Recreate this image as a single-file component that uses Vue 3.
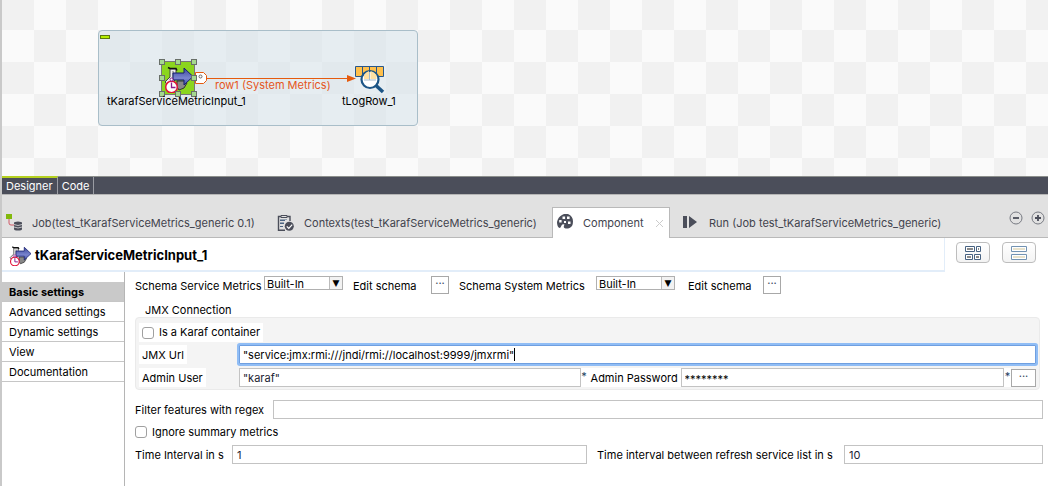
<script setup>
import { ref } from 'vue'

const sections = ['Basic settings', 'Advanced settings', 'Dynamic settings', 'View', 'Documentation']
const handles = [[162, 62], [178, 62], [194, 62], [162, 78], [194, 78], [162, 94], [178, 94], [194, 94]]
const serviceSchema = ref('Built-In')
const systemSchema = ref('Built-In')
const jmxUrl = ref('"service:jmx:rmi:///jndi/rmi://localhost:9999/jmxrmi"')
const adminUser = ref('"karaf"')
const adminPassword = ref('********')
const regex = ref('')
const interval = ref('1')
const refreshInterval = ref('10')
</script>

<template>
  <div class="studio">
    <svg class="defs" width="0" height="0" aria-hidden="true">
      <defs>
        <linearGradient id="arrowFill" x1="0" y1="0" x2="0" y2="1">
          <stop offset="0" stop-color="#3a479c" /><stop offset="0.6" stop-color="#7a85cf" /><stop offset="1" stop-color="#3f4aa5" />
        </linearGradient>
        <symbol id="karaf" viewBox="0 0 32 32">
          <path d="M9 8h6v9l-3 5-6 1-2-2 5-5z" fill="#eee" stroke="#444" />
          <path d="M12 10v8" stroke="#aaa" stroke-width="2" />
          <path d="M7 6.500l2 1h6l1 2" fill="none" stroke="#111" stroke-width="1.500" />
          <path d="M16 20h8l2 2-3 5-5 2-2-3z" fill="#888" stroke="#333" />
          <path d="M12 12h11V7l9 8.500-9 8.500v-5H12z" fill="url(#arrowFill)" stroke="#141c6e" />
          <circle cx="10.500" cy="26" r="5.800" fill="#fff" stroke="#e3123a" stroke-width="1.500" />
          <path d="M10.500 21.500v5h4" fill="none" stroke="#8a1a8c" stroke-width="1.300" />
          <circle cx="10.500" cy="18.500" r="1.500" fill="#fff" stroke="#8a1a8c" />
        </symbol>
      </defs>
    </svg>

    <main class="canvas">
      <div class="subjob"><span class="collapse"></span></div>
      <svg class="diagram" width="420" height="130" aria-hidden="true">
        <rect x="161.500" y="61.500" width="33" height="33" fill="#8bd51e" stroke="#777" />
        <use href="#karaf" x="161" y="61" width="32" height="32" />
        <path d="M195.500 72.500h8l3 3v5l-3 3h-8z" fill="#fff" stroke="#e55b0e" />
        <circle cx="200.500" cy="76.500" r="1.500" fill="none" stroke="#666" />
        <path d="M207 78.500h142" stroke="#e55b0e" />
        <path d="M347 75l9 3.500-9 3.500z" fill="#e55b0e" />
        <rect v-for="([x, y], i) in handles" :key="i" :x="x - 2.5" :y="y - 2.5" width="5" height="5" fill="#a5d88f" stroke="#686f68" />
        <path d="M355.500 66.500h28v10h-28z" fill="#ffc04c" stroke="#28578a" />
        <path d="M362.500 66v11M369.500 66v11M376.500 66v11" stroke="#28578a" />
        <circle cx="370" cy="79.500" r="8.500" fill="#fff" stroke="#1c5586" stroke-width="2.200" />
        <path d="M364 79v-4q2-3 5-4v8zM370.500 71q4 1 6 4v4h-6z" fill="#ffe1a3" />
        <path d="M364 80h12M369.500 72v8" stroke="#a3b8ca" />
        <path d="M376 85.500l7 6.500" stroke="#1c5586" stroke-width="3.500" />
      </svg>
      <span class="node-label source">tKarafServiceMetricInput_1</span>
      <span class="node-label link">row1 (System Metrics)</span>
      <span class="node-label target">tLogRow_1</span>
    </main>

    <nav class="editor-tabs">
      <button class="etab active">Designer</button>
      <button class="etab">Code</button>
    </nav>

    <nav class="view-tabs">
      <button class="vtab job">
        <svg width="18" height="18" viewBox="0 0 18 18"><path d="M0 0h6v5H0z" fill="#82b90c" /><path d="M3 5v4q0 2 2 2h3" fill="none" stroke="#d05a68" /><path d="M8 9q0-1.500 4-1.500T16 9v6q0 1.500-4 1.500T8 15z" fill="#4b4e5a" /><path d="M8 10.500q4 2 8 0M8 13q4 2 8 0" fill="none" stroke="#e1e1e1" stroke-width=".8" /></svg>
        <span>Job(test_tKarafServiceMetrics_generic 0.1)</span>
      </button>
      <button class="vtab contexts">
        <svg width="18" height="18" viewBox="0 0 18 18"><path d="M4 2.500H1.500v13.800H8M10 2.500h3V7" fill="none" stroke="#4b4e5a" stroke-width="1.400" /><path d="M4 1.500h6v2H4z" fill="#e1e1e1" stroke="#4b4e5a" /><path d="M3 6.500h5M3 9.500h4M3 12.500h3" stroke="#4b6482" /><path d="M3 5.500h7M3 8.500h4" stroke="#4b6482" stroke-width=".5" /><circle cx="12.300" cy="12.300" r="4.500" fill="#4b4e5a" /><path d="M9.800 12.300l2 2 3.400-3.600" fill="none" stroke="#fff" stroke-width="1.200" /></svg>
        <span>Contexts(test_tKarafServiceMetrics_generic)</span>
      </button>
      <button class="vtab component current">
        <svg width="18" height="18" viewBox="0 0 18 18"><path fill-rule="evenodd" d="M6 1Q9-1 12 0q5 2 5 7.500 0 5-3.500 6.500-3 1-5 0-1.500-1 0-3.500-2-1-3 1-1 2.500-2 2.500Q1 13 1 8 2 3 6 1zM6.500 2.500v2.600h2.600V2.500zM11 2.500v2.600h2.600V2.500zM3.200 6v2.400h2.400V6zM8 7v2h2V7zM12 7.500v2.500h2.500V7.500z" fill="#4b4e5a" /></svg>
        <span>Component</span>
        <svg class="close" width="9" height="9" viewBox="0 0 9 9"><path d="M1 1l7 7M8 1L1 8" stroke="#ccc" /></svg>
      </button>
      <button class="vtab run">
        <svg width="16" height="14" viewBox="0 0 16 14"><path d="M0 0h4v12H0zM6 0l8 6-8 6z" fill="#4b4e5a" /></svg>
        <span>Run (Job test_tKarafServiceMetrics_generic)</span>
      </button>
      <div class="window-tools">
        <button class="round" aria-label="Minimize"><svg width="14" height="14" viewBox="0 0 14 14"><circle cx="7" cy="7" r="6" fill="none" stroke="#777a82" /><path d="M4 7h6" stroke="#4b4e5a" stroke-width="1.800" /></svg></button>
        <button class="round" aria-label="Maximize"><svg width="14" height="14" viewBox="0 0 14 14"><circle cx="7" cy="7" r="6" fill="none" stroke="#777a82" /><path d="M4 7h6M7 4v6" stroke="#4b4e5a" stroke-width="1.800" /></svg></button>
      </div>
    </nav>

    <header class="title-row">
      <div class="title">
        <svg width="24" height="24" viewBox="0 0 32 32"><use href="#karaf" width="32" height="32" /></svg>
        <h1>tKarafServiceMetricInput_1</h1>
      </div>
      <div class="layout-tools">
        <button aria-label="Table layout"><svg width="16" height="14" viewBox="0 0 16 14"><g fill="#fff" stroke="#476282"><path d="M.5.500h9v5h-9zM11.500.500h4v5h-4zM.5 8.500h7v5h-7zM9.500 8.500h6v5h-6z" /></g><path d="M2 2h6v2H2zM13 2h1v2h-1zM2 10h4v2H2zM11 10h3v2h-3z" fill="#8b8b8b" /></svg></button>
        <button aria-label="Compact layout"><svg width="16" height="14" viewBox="0 0 16 14"><g fill="#fff" stroke="#7393b3"><path d="M.5.500h15v5H.5zM.5 8.500h15v5H.5z" /></g><path d="M2 2h12v2H2zM2 10h12v2H2z" fill="#e8e2cc" /></svg></button>
      </div>
    </header>

    <section class="body">
      <nav class="sections">
        <button v-for="(name, i) in sections" :key="name" :class="{ selected: i === 0 }">{{ name }}</button>
      </nav>

      <form class="settings" @submit.prevent>
        <div class="schemas">
          <label class="schema-label" for="service-schema">Schema Service Metrics</label>
          <span class="select"><select id="service-schema" v-model="serviceSchema"><option>Built-In</option></select><i>▼</i></span>
          <span class="edit">Edit schema</span>
          <button class="dots" type="button" aria-label="Edit service schema">···</button>
          <label class="schema-label second" for="system-schema">Schema System Metrics</label>
          <span class="select"><select id="system-schema" v-model="systemSchema"><option>Built-In</option></select><i>▼</i></span>
          <span class="edit second-edit">Edit schema</span>
          <button class="dots" type="button" aria-label="Edit system schema">···</button>
        </div>

        <div class="group-title">JMX Connection</div>
        <div class="group">
          <label class="chip check"><input type="checkbox" />Is a Karaf container</label>
          <div class="line">
            <span class="lead"><label class="chip" for="jmx">JMX Url</label></span>
            <span class="focus-box">
              <input id="jmx" v-model="jmxUrl" class="field focused" />
              <span class="caret-layer" aria-hidden="true"><span class="ghost">{{ jmxUrl }}</span><b class="caret"></b></span>
            </span>
          </div>
          <div class="line admin">
            <span class="lead"><label class="chip" for="user">Admin User</label></span>
            <input id="user" v-model="adminUser" class="field user" />
            <span class="star">*</span>
            <label class="chip pass-label" for="password">Admin Password</label>
            <input id="password" v-model="adminPassword" class="field password" />
            <span class="star">*</span>
            <button class="dots wide" type="button" aria-label="Edit password">···</button>
          </div>
        </div>

        <div class="line filter">
          <label for="regex">Filter features with regex</label>
          <input id="regex" v-model="regex" class="field" />
        </div>
        <label class="check ignore"><input type="checkbox" />Ignore summary metrics</label>
        <div class="line times">
          <label for="interval">Time Interval in s</label>
          <input id="interval" v-model="interval" class="field interval" />
          <label class="refresh-label" for="refresh">Time interval between refresh service list in s</label>
          <input id="refresh" v-model="refreshInterval" class="field refresh" />
        </div>
      </form>
    </section>
  </div>
</template>

<style>
body { margin: 0; background: #fff; }
</style>

<style scoped>
.studio, .studio * { box-sizing: border-box; }
.studio {
  font: 11px/14px Inter, "Liberation Sans", sans-serif;
  color: #000;
  min-height: 100vh;
  border-left: 2px solid #c9c9c9;
  display: flex;
  flex-direction: column;
}
.defs { position: absolute; }
button, input, select { font: inherit; color: inherit; margin: 0; border-radius: 0; }
button { background: none; border: 0; padding: 0; white-space: nowrap; }
label, span { white-space: nowrap; }
svg { flex: none; }

.canvas {
  position: relative;
  height: 176px;
  overflow: hidden;
  background: repeating-conic-gradient(#fafafa 0 25%, #f1f1f1 0 50%) 0 -2px / 64px 64px;
}
.subjob {
  position: absolute;
  left: 96px;
  top: 30px;
  width: 320px;
  height: 96px;
  border: 1px solid #a9bec9;
  border-radius: 4px;
  background: rgba(216, 229, 235, 0.6);
}
.collapse { position: absolute; left: 1px; top: 4px; width: 10px; height: 4px; background: #b4ee00; border: 1px solid #5d7a10; }
.diagram { position: absolute; left: -2px; top: 0; }
.node-label { position: absolute; }
.source { left: 105px; top: 94px; }
.link { left: 213px; top: 78px; color: #e5561c; }
.target { left: 340px; top: 94px; }

.editor-tabs { display: flex; height: 19px; background: #4b4e5a; border-top: 1px solid #8c8f8c; border-bottom: 1px solid #b5b5b5; }
.etab { color: #fff; padding: 0 4px; border-right: 1px solid #9a9ca3; height: 17px; }
.etab.active { border-top: 2px solid #b5d120; margin-top: -1px; height: 18px; }

.view-tabs { display: flex; height: 43px; background: #e1e1e1; border-bottom: 1px solid #b9b9b9; }
.vtab { display: flex; align-items: center; align-self: flex-end; height: 30px; color: #41434d; border: 1px solid transparent; border-bottom: 0; }
.vtab svg { margin-right: 8px; }
.job { padding-left: 3px; width: 272px; }
.contexts { padding-left: 2px; width: 278px; }
.contexts svg { margin-right: 9px; }
.component { padding-left: 3px; width: 118px; }
.component svg { margin-right: 9px; }
.component .close { margin: 0 5px 0 auto; }
.current { background: #fff; height: 31px; margin-bottom: -1px; border-color: #b9b9b9; }
.run { padding-left: 12px; }
.run svg { margin-right: 10px; }
.window-tools { display: flex; gap: 8px; margin: 16px 3px 0 auto; height: 14px; }
.round, .round svg { display: block; width: 14px; height: 14px; }

.title-row { display: flex; height: 34px; align-items: flex-start; }
.title { flex: 1; display: flex; align-items: center; height: 34px; border-bottom: 2px solid #e2edf9; border-right: 1px solid #e2edf9; padding-left: 5px; }
h1 { font-size: 13px; line-height: 16px; margin: 2px 0 0 4px; font-weight: 700; }
.layout-tools { display: flex; gap: 12px; padding: 4px 12px 0 11px; }
.layout-tools button { width: 34px; height: 21px; border: 1px solid #bdbdbd; border-radius: 4px; background: linear-gradient(#fff, #f3f3f3); display: flex; align-items: center; justify-content: center; }

.body { flex: 1; display: flex; }
.sections { width: 123px; border-right: 1px solid #b5b5b5; padding-top: 10px; flex: none; }
.sections button { display: block; width: 100%; height: 20px; text-align: left; padding-left: 7px; border-bottom: 1px solid #c6c6c6; }
.sections .selected { background: #c9c9c9; font-weight: 700; }

.settings { flex: 1; min-width: 0; padding: 4px 5px 0 10px; }
.schemas { display: flex; height: 20px; align-items: flex-start; }
.schemas label, .edit { line-height: 20px; }
.schema-label { width: 129px; }
.schema-label.second { margin-left: 10px; width: 137px; }
.select { position: relative; width: 79px; height: 14px; }
select { appearance: none; display: block; width: 100%; height: 14px; padding: 1px 2px 0; border: 1px solid #b0b0b0; background: #fff; line-height: 12px; }
.select i { position: absolute; right: 1px; top: 1px; width: 13px; height: 12px; border-left: 1px solid #bbb; background: #f2f2f2; font: 9px/12px "DejaVu Sans", sans-serif; text-align: center; pointer-events: none; }
.edit { margin-left: 10px; width: 78px; }
.second-edit { margin-left: 13px; width: 75px; }
.dots { width: 18px; height: 18px; border: 1px solid #a8a8a8; background: #fff; padding-bottom: 4px; line-height: 12px; color: #39475c; display: block; flex: none; }
.dots.wide { width: 25px; }

.group-title { padding-left: 10px; margin-top: 7px; height: 14px; }
.group { background: #f4f4f4; border: 1px solid #eaeaea; border-radius: 4px; padding: 5px 3px 2px 3px; height: 73px; margin-right: 3px; }
.chip { display: inline-block; background: #fff; padding: 0 3px; height: 19px; line-height: 19px; }
.line .chip { line-height: 21px; }
.check { display: flex; width: max-content; align-items: center; }
.check input { appearance: none; width: 12px; height: 12px; border: 1px solid #a0a0a0; border-radius: 3px; background: #fff; margin: 0 5px 0 0; }
.line { display: flex; align-items: center; }
.group .line { margin-top: 3px; height: 19px; }
.group .line.admin { margin-top: 4px; }
.lead { width: 100px; flex: none; display: flex; }
.field { border: 1px solid #c3c3c3; background: #fff; height: 19px; padding: 1px 4px 0; min-width: 0; outline: 0; flex: 1; color: #1c2433; }
.focus-box { flex: 1; display: flex; position: relative; }
.field.focused { border-color: #6f9fe0; box-shadow: 0 0 0 2px #90bdf5; border-radius: 1px; color: #000; padding-left: 3px; }
.caret-layer { position: absolute; left: 4px; top: 3px; display: flex; height: 13px; pointer-events: none; }
.ghost { visibility: hidden; }
.caret { width: 1px; height: 13px; background: #000; }
.star { width: 7px; text-align: center; align-self: flex-start; line-height: 16px; color: #24405f; flex: none; background: #fff; height: 19px; }
.pass-label { width: 93px; flex: none; }
.user { flex: 331 1 0; padding-left: 3px; }
.password { flex: 314 1 0; padding: 2px 3px 0; color: #000; }

.filter { margin-top: 10px; }
.filter label { width: 138px; line-height: 16px; }
.ignore { height: 14px; margin-top: 6px; }
.times { margin-top: 6px; }
.times label { width: 97px; line-height: 16px; }
.times .refresh-label { width: 257px; padding-left: 10px; }
.interval { flex: 345 1 0; }
.refresh { flex: 189 1 0; }
</style>
